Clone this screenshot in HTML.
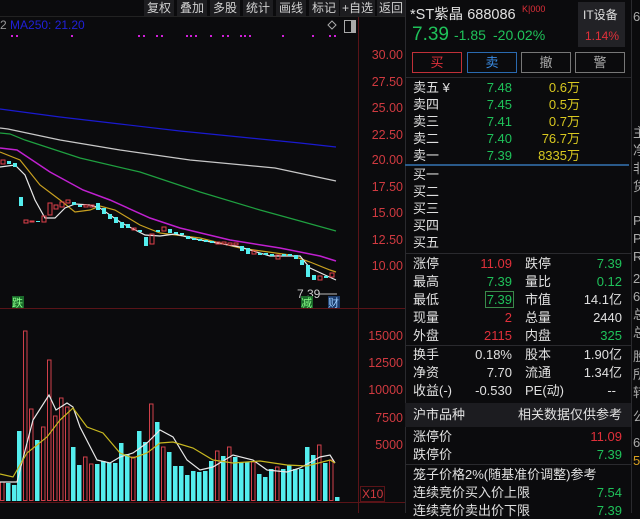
<!DOCTYPE html>
<html><head><meta charset="utf-8"><style>
*{margin:0;padding:0;box-sizing:border-box}
body{width:640px;height:513px;background:#0b0b0d;overflow:hidden;position:relative;font-family:"Liberation Sans","Noto Sans CJK SC",sans-serif;color:#ddd}
.a{position:absolute;white-space:nowrap}
.tb{position:absolute;top:0;height:16px;background:#1d1d20;color:#d0d0d0;font-size:12px;line-height:16px;text-align:center}
.ax{position:absolute;right:237px;color:#d03a40;font-size:12.5px;line-height:14px}
.rw{position:absolute;left:413px;font-size:13px;line-height:17px;width:215px;height:17px}
.rw span{position:absolute}
.g{color:#1fc25a}.r{color:#e0303a}.y{color:#d8c820}.w{color:#e0e0e0}
.hl{position:absolute;left:405px;width:226px;height:1px;background:#2a2a2e}
.btn{position:absolute;top:52px;height:21px;font-size:13px;line-height:19px;text-align:center;border:1.5px solid #777}
</style></head><body>
<div class="tb" style="left:144px;width:30px">复权</div>
<div class="tb" style="left:177px;width:30px">叠加</div>
<div class="tb" style="left:210px;width:30px">多股</div>
<div class="tb" style="left:243px;width:30px">统计</div>
<div class="tb" style="left:276px;width:30px">画线</div>
<div class="tb" style="left:309px;width:30px">标记</div>
<div class="tb" style="left:340px;width:35px">+自选</div>
<div class="tb" style="left:377px;width:28px">返回</div>
<div class="a" style="left:0;top:18px;font-size:12px;color:#999">2 <span style="color:#2020d8">MA250: 21.20</span></div>
<svg class="a" style="left:0;top:0" width="405" height="513">
<line x1="0" y1="16.5" x2="405" y2="16.5" stroke="#222"/>
<line x1="358.5" y1="17" x2="358.5" y2="513" stroke="#5a1418"/>
<line x1="0" y1="308.5" x2="405" y2="308.5" stroke="#5a1418"/>
<line x1="0" y1="502.5" x2="405" y2="502.5" stroke="#5a1418"/>
<g fill="#d020d8">
<rect x="11" y="35" width="2" height="2"/><rect x="16" y="35" width="2" height="2"/><rect x="71" y="35" width="2" height="2"/>
<rect x="138" y="35" width="2" height="2"/><rect x="143" y="35" width="2" height="2"/><rect x="156" y="35" width="2" height="2"/><rect x="161" y="35" width="2" height="2"/>
<rect x="186" y="35" width="2" height="2"/><rect x="190" y="35" width="2" height="2"/><rect x="195" y="35" width="2" height="2"/><rect x="210" y="35" width="2" height="2"/>
<rect x="222" y="35" width="2" height="2"/><rect x="227" y="35" width="2" height="2"/><rect x="240" y="35" width="2" height="2"/><rect x="244" y="35" width="2" height="2"/><rect x="249" y="35" width="2" height="2"/>
<rect x="282" y="35" width="2" height="2"/><rect x="312" y="35" width="2" height="2"/><rect x="329" y="35" width="2" height="2"/><rect x="334" y="35" width="2" height="2"/>
</g>
<path d="M332 21l4 4-4 4-4-4z" fill="none" stroke="#aaa"/>
<rect x="344.5" y="20.5" width="11" height="12" fill="none" stroke="#aaa"/><rect x="351" y="21" width="4" height="11" fill="#aaa"/>
<g fill="none" stroke-width="1.2">
<polyline stroke="#1a1ad0" points="0,109 60,117 120,124 180,131 240,137 300,143 336,147"/>
<polyline stroke="#c8c8c8" points="0,128 8,129 60,140 120,150 190,160 275,168 336,181"/>
<polyline stroke="#1fa040" points="0,133 10,134 25,140 80,158 140,172 200,192 260,210 300,221 336,231"/>
<polyline stroke="#c020d0" stroke-width="1.5" points="0,148 17,150 50,172 83,190 110,200 150,218 180,228 230,240 280,248 320,256 336,261"/>
<polyline stroke="#c8a020" points="0,152 20,160 40,185 60,200 75,212 90,210 100,206 115,210 140,225 160,233 200,238 240,248 290,255 310,262 330,270 336,272"/>
<polyline stroke="#e8e8e8" points="0,167 15,165 25,175 35,200 45,218 55,218 65,208 75,204 90,205 100,208 120,222 145,235 160,236 175,234 200,240 240,247 270,256 300,256 310,268 325,275 336,280"/>
</g>
<g stroke="#e0404a" fill="none">
<rect x="1" y="160" width="4" height="4"/><rect x="24" y="220" width="4" height="3"/><rect x="30" y="221" width="4" height="1"/><rect x="42" y="216" width="4" height="6"/>
<rect x="48" y="203" width="4" height="12"/><rect x="54" y="205" width="4" height="4"/><rect x="60" y="202" width="4" height="5"/><rect x="66" y="200" width="4" height="3"/>
<rect x="84" y="205" width="4" height="2"/><rect x="90" y="205" width="4" height="2"/><rect x="132" y="228" width="4" height="2"/><rect x="150" y="234" width="4" height="10"/>
<rect x="162" y="227" width="4" height="4"/><rect x="216" y="242" width="4" height="2"/><rect x="222" y="242" width="4" height="2"/><rect x="228" y="243" width="4" height="2"/>
<rect x="234" y="243" width="4" height="2"/><rect x="252" y="251" width="4" height="3"/><rect x="276" y="255" width="4" height="4"/><rect x="318" y="276" width="4" height="4"/><rect x="330" y="273" width="4" height="4"/>
</g>
<g fill="#54eeee">
<rect x="7" y="161" width="4" height="3"/><rect x="13" y="163" width="4" height="4"/><rect x="19" y="197" width="4" height="9"/><rect x="36" y="221" width="4" height="1"/>
<rect x="72" y="202" width="4" height="3"/><rect x="78" y="205" width="4" height="2"/><rect x="96" y="203" width="4" height="7"/><rect x="102" y="208" width="4" height="6"/>
<rect x="108" y="214" width="4" height="5"/><rect x="114" y="217" width="4" height="6"/><rect x="120" y="222" width="4" height="6"/><rect x="126" y="224" width="4" height="4"/>
<rect x="138" y="230" width="4" height="2"/><rect x="144" y="237" width="4" height="9"/><rect x="156" y="230" width="4" height="2"/><rect x="168" y="229" width="4" height="4"/>
<rect x="174" y="232" width="4" height="2"/><rect x="180" y="233" width="4" height="2"/><rect x="186" y="236" width="4" height="3"/><rect x="192" y="238" width="4" height="2"/>
<rect x="198" y="239" width="4" height="2"/><rect x="204" y="240" width="4" height="2"/><rect x="210" y="241" width="4" height="2"/><rect x="240" y="246" width="4" height="5"/>
<rect x="246" y="248" width="4" height="6"/><rect x="258" y="253" width="4" height="2"/><rect x="264" y="253" width="4" height="2"/><rect x="270" y="254" width="4" height="2"/>
<rect x="282" y="254" width="4" height="2"/><rect x="288" y="254" width="4" height="2"/><rect x="294" y="255" width="4" height="4"/><rect x="300" y="260" width="4" height="5"/>
<rect x="306" y="265" width="4" height="12"/><rect x="312" y="275" width="4" height="5"/><rect x="324" y="276" width="4" height="2"/>
</g>
<text x="297" y="298" fill="#ccc" font-size="12" font-family="Liberation Sans">7.39</text>
<line x1="318" y1="294" x2="337" y2="294" stroke="#bbb"/>
<rect x="12" y="296" width="12" height="12" fill="#1a6a2a"/><text x="12" y="306.5" fill="#8f8" font-size="11" font-family="Noto Sans CJK SC">跌</text>
<rect x="301" y="296" width="12" height="12" fill="#1a6a2a"/><text x="301" y="306.5" fill="#8f8" font-size="11" font-family="Noto Sans CJK SC">减</text>
<rect x="328" y="296" width="12" height="12" fill="#1a3a6a"/><text x="328" y="306.5" fill="#9cf" font-size="11" font-family="Noto Sans CJK SC">财</text>
<g stroke="#d0404a" fill="none">
<rect x="0.5" y="482" width="3.5" height="18.5"/><rect x="23.5" y="331" width="3.5" height="169.5"/><rect x="29.5" y="409" width="3.5" height="91.5"/>
<rect x="41.5" y="427" width="3.5" height="73.5"/><rect x="47.5" y="360" width="3.5" height="140.5"/><rect x="53.5" y="416" width="3.5" height="84.5"/>
<rect x="59.5" y="398" width="3.5" height="102.5"/><rect x="65.5" y="407" width="3.5" height="93.5"/><rect x="83.5" y="457" width="3.5" height="43.5"/>
<rect x="89.5" y="464" width="3.5" height="36.5"/><rect x="131.5" y="457" width="3.5" height="43.5"/><rect x="149.5" y="404" width="3.5" height="96.5"/>
<rect x="161.5" y="447" width="3.5" height="53.5"/><rect x="215.5" y="451" width="3.5" height="49.5"/><rect x="227.5" y="447" width="3.5" height="53.5"/>
<rect x="251.5" y="462" width="3.5" height="38.5"/><rect x="275.5" y="467" width="3.5" height="33.5"/><rect x="317.5" y="445" width="3.5" height="55.5"/><rect x="329.5" y="460" width="3.5" height="40.5"/>
</g>
<g fill="#54eeee">
<rect x="6" y="483" width="4.5" height="18"/><rect x="12" y="485" width="4.5" height="16"/><rect x="17" y="431" width="4.5" height="70"/><rect x="35" y="440" width="4.5" height="61"/>
<rect x="71" y="447" width="4.5" height="54"/><rect x="77" y="465" width="4.5" height="36"/><rect x="95" y="464" width="4.5" height="37"/><rect x="101" y="461" width="4.5" height="40"/>
<rect x="107" y="463" width="4.5" height="38"/><rect x="113" y="463" width="4.5" height="38"/><rect x="119" y="443" width="4.5" height="58"/><rect x="125" y="454" width="4.5" height="47"/>
<rect x="137" y="431" width="4.5" height="70"/><rect x="143" y="442" width="4.5" height="59"/><rect x="155" y="422" width="4.5" height="79"/><rect x="167" y="452" width="4.5" height="49"/>
<rect x="173" y="466" width="4.5" height="35"/><rect x="179" y="466" width="4.5" height="35"/><rect x="185" y="475" width="4.5" height="26"/><rect x="191" y="471" width="4.5" height="30"/>
<rect x="197" y="472" width="4.5" height="29"/><rect x="203" y="471" width="4.5" height="30"/><rect x="209" y="461" width="4.5" height="40"/><rect x="221" y="456" width="4.5" height="45"/>
<rect x="233" y="457" width="4.5" height="44"/><rect x="239" y="462" width="4.5" height="39"/><rect x="245" y="462" width="4.5" height="39"/><rect x="257" y="474" width="4.5" height="27"/>
<rect x="263" y="477" width="4.5" height="24"/><rect x="269" y="469" width="4.5" height="32"/><rect x="281" y="469" width="4.5" height="32"/><rect x="287" y="465" width="4.5" height="36"/>
<rect x="293" y="469" width="4.5" height="32"/><rect x="299" y="469" width="4.5" height="32"/><rect x="305" y="447" width="4.5" height="54"/><rect x="311" y="455" width="4.5" height="46"/>
<rect x="323" y="463" width="4.5" height="38"/><rect x="335" y="497" width="4.5" height="4"/>
</g>
<g fill="none" stroke-width="1.2">
<polyline stroke="#e8e8e8" points="0,482 17,482 27,443 33,420 49,395 56,410 67,403 73,407 80,427 97,460 110,463 120,457 133,453 147,443 160,430 173,437 187,460 200,470 213,467 233,455 253,460 267,470 287,472 300,468 320,457 330,455 335,463"/>
<polyline stroke="#c8b820" points="0,474 13,477 27,453 47,437 60,420 73,408 87,427 103,433 120,453 133,458 147,453 160,443 173,442 193,448 213,460 233,463 260,461 287,465 307,466 330,460 335,463"/>
</g>
<text x="362" y="498" fill="#d03a40" font-size="12" font-family="Liberation Sans">X10</text>
<rect x="360.5" y="486.5" width="24" height="15" fill="none" stroke="#5a1418"/>
</svg>
<div class="ax" style="top:48px">30.00</div><div class="ax" style="top:75px">27.50</div><div class="ax" style="top:101px">25.00</div>
<div class="ax" style="top:128px">22.50</div><div class="ax" style="top:153px">20.00</div><div class="ax" style="top:180px">17.50</div>
<div class="ax" style="top:206px">15.00</div><div class="ax" style="top:233px">12.50</div><div class="ax" style="top:259px">10.00</div>
<div class="ax" style="top:329px">15000</div><div class="ax" style="top:356px">12500</div><div class="ax" style="top:383px">10000</div>
<div class="ax" style="top:411px">7500</div><div class="ax" style="top:438px">5000</div>

<div class="a" style="left:405px;top:0;width:1px;height:513px;background:#2a2a2e"></div>
<div class="a w" style="left:410px;top:3px;font-size:14.5px">*ST紫晶 688086</div>
<div class="a r" style="left:522px;top:4px;font-size:9px">K|000</div>
<div class="a" style="left:578px;top:2px;width:47px;height:45px;background:#222226"></div>
<div class="a w" style="left:583px;top:6px;font-size:12px">IT设备</div>
<div class="a r" style="left:585px;top:29px;font-size:12px">1.14%</div>
<div class="a g" style="left:412px;top:24px;font-size:19px">7.39</div>
<div class="a g" style="left:454px;top:27px;font-size:14px">-1.85</div>
<div class="a g" style="left:493px;top:27px;font-size:14px">-20.02%</div>
<div class="btn r" style="left:412px;width:50px;border-color:#c03038">买</div>
<div class="btn" style="left:467px;width:50px;border-color:#2a6ab0;color:#3a8ae0">卖</div>
<div class="btn" style="left:521px;width:50px;color:#aaa">撤</div>
<div class="btn" style="left:575px;width:50px;color:#aaa">警</div>
<div class="hl" style="top:77px"></div>
<div class="rw" style="top:79px"><span class="w">卖五 ¥</span><span class="g" style="right:116px">7.48</span><span class="y" style="right:48px">0.6万</span></div>
<div class="rw" style="top:96px"><span class="w">卖四</span><span class="g" style="right:116px">7.45</span><span class="y" style="right:48px">0.5万</span></div>
<div class="rw" style="top:113px"><span class="w">卖三</span><span class="g" style="right:116px">7.41</span><span class="y" style="right:48px">0.7万</span></div>
<div class="rw" style="top:130px"><span class="w">卖二</span><span class="g" style="right:116px">7.40</span><span class="y" style="right:48px">76.7万</span></div>
<div class="rw" style="top:147px"><span class="w">卖一</span><span class="g" style="right:116px">7.39</span><span class="y" style="right:48px">8335万</span></div>
<div class="a" style="left:405px;top:164px;width:224px;height:2px;background:#2a5a8a"></div>
<div class="rw" style="top:166px"><span class="w">买一</span></div>
<div class="rw" style="top:183px"><span class="w">买二</span></div>
<div class="rw" style="top:200px"><span class="w">买三</span></div>
<div class="rw" style="top:217px"><span class="w">买四</span></div>
<div class="rw" style="top:234px"><span class="w">买五</span></div>
<div class="hl" style="top:253px"></div>
<div class="rw" style="top:255px"><span class="w">涨停</span><span class="r" style="right:116px">11.09</span><span class="w" style="left:112px">跌停</span><span class="g" style="right:6px">7.39</span></div>
<div class="rw" style="top:273px"><span class="w">最高</span><span class="g" style="right:116px">7.39</span><span class="w" style="left:112px">量比</span><span class="g" style="right:6px">0.12</span></div>
<div class="rw" style="top:291px"><span class="w">最低</span><span class="g" style="right:114px;border:1px solid #3a8a4a;padding:0 1px;line-height:15px">7.39</span><span class="w" style="left:112px">市值</span><span class="w" style="right:6px">14.1亿</span></div>
<div class="rw" style="top:309px"><span class="w">现量</span><span class="r" style="right:116px">2</span><span class="w" style="left:112px">总量</span><span class="w" style="right:6px">2440</span></div>
<div class="rw" style="top:327px"><span class="w">外盘</span><span class="r" style="right:116px">2115</span><span class="w" style="left:112px">内盘</span><span class="g" style="right:6px">325</span></div>
<div class="hl" style="top:345px"></div>
<div class="rw" style="top:346px"><span class="w">换手</span><span class="w" style="right:116px">0.18%</span><span class="w" style="left:112px">股本</span><span class="w" style="right:6px">1.90亿</span></div>
<div class="rw" style="top:364px"><span class="w">净资</span><span class="w" style="right:116px">7.70</span><span class="w" style="left:112px">流通</span><span class="w" style="right:6px">1.34亿</span></div>
<div class="rw" style="top:382px"><span class="w">收益(-)</span><span class="w" style="right:116px">-0.530</span><span class="w" style="left:112px">PE(动)</span><span class="w" style="right:12px">--</span></div>
<div class="a" style="left:405px;top:403px;width:226px;height:24px;background:#1c1c20"></div>
<div class="rw" style="top:406px"><span class="w">沪市品种</span><span class="w" style="right:6px">相关数据仅供参考</span></div>
<div class="rw" style="top:428px"><span class="w">涨停价</span><span class="r" style="right:6px">11.09</span></div>
<div class="rw" style="top:446px"><span class="w">跌停价</span><span class="g" style="right:6px">7.39</span></div>
<div class="hl" style="top:464px"></div>
<div class="rw" style="top:466px"><span class="w">笼子价格2%(随基准价调整)参考</span></div>
<div class="rw" style="top:484px"><span class="w">连续竞价买入价上限</span><span class="g" style="right:6px">7.54</span></div>
<div class="rw" style="top:502px"><span class="w">连续竞价卖出价下限</span><span class="g" style="right:6px">7.39</span></div>
<div class="a" style="left:631px;top:0;width:1px;height:513px;background:#2a2a2e"></div>
<div class="a" style="left:633px;top:0;width:7px;height:513px;overflow:hidden;font-size:13px;color:#aaa;line-height:18px">
<div style="margin-top:8px">6</div><div style="margin-top:98px">主</div><div>净</div><div>非</div><div>货</div><div style="margin-top:16px">P</div><div>P</div><div>R</div><div style="margin-top:4px">2</div><div>6</div><div>总</div><div>总</div><div style="margin-top:6px">股</div><div>所</div><div>转</div><div style="margin-top:6px">公</div><div style="margin-top:8px">6</div><div style="color:#d8a020">5</div></div>
</body></html>
